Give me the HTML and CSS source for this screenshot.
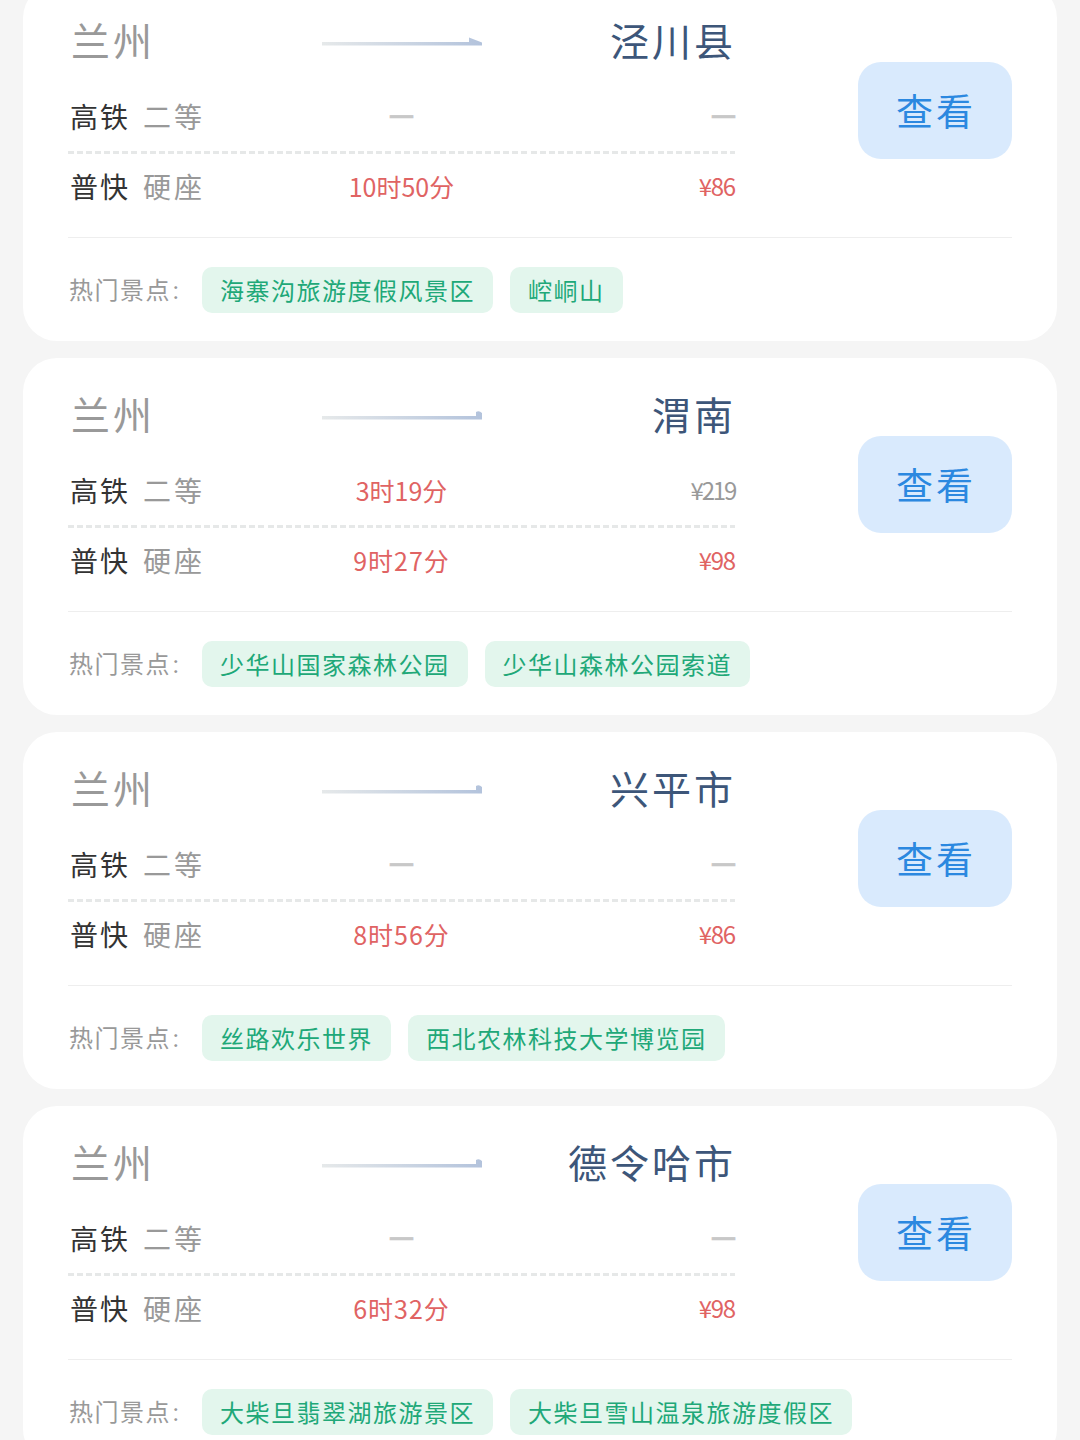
FILE: index.html
```
<!DOCTYPE html>
<html lang="zh-CN">
<head>
<meta charset="utf-8">
<title>兰州</title>
<link rel="stylesheet" href="styles.css">
</head>
<body>

<div class="list">

<div class="card">
  <div class="main">
    <div class="info">
      <div class="route">
        <span class="from">兰州</span>
        <svg class="arrow" width="160" height="10" viewBox="0 0 160 10">
          <defs><linearGradient id="fade"><stop offset="0" stop-color="#e6e9ea"/><stop offset="1" stop-color="#b3c3dc"/></linearGradient></defs>
          <path d="M0 5h147v-4.5l13 5v3H0z" fill="url(#fade)"/>
        </svg>
        <span class="to">泾川县</span>
      </div>
      <div class="row">
        <span class="type">高铁<i>二等</i></span><span class="time none">—</span><span class="price none">—</span>
      </div>
      <div class="row">
        <span class="type">普快<i>硬座</i></span><span class="time red">10时50分</span><span class="price red">¥86</span>
      </div>
    </div>
    <a class="view">查看</a>
  </div>
  <div class="spots">
    <span class="label">热门景点<b>：</b></span>
    <span class="tag">海寨沟旅游度假风景区</span>
    <span class="tag">崆峒山</span>
  </div>
</div>

<div class="card">
  <div class="main">
    <div class="info">
      <div class="route">
        <span class="from">兰州</span>
        <svg class="arrow" width="160" height="10" viewBox="0 0 160 10">
          <path d="M0 5h154v-4q3-2 6 1v6.5H0z" fill="url(#fade)"/>
        </svg>
        <span class="to">渭南</span>
      </div>
      <div class="row">
        <span class="type">高铁<i>二等</i></span><span class="time red">3时19分</span><span class="price long">¥219</span>
      </div>
      <div class="row">
        <span class="type">普快<i>硬座</i></span><span class="time red wide">9时27分</span><span class="price red">¥98</span>
      </div>
    </div>
    <a class="view">查看</a>
  </div>
  <div class="spots">
    <span class="label">热门景点<b>：</b></span>
    <span class="tag">少华山国家森林公园</span>
    <span class="tag">少华山森林公园索道</span>
  </div>
</div>

<div class="card">
  <div class="main">
    <div class="info">
      <div class="route">
        <span class="from">兰州</span>
        <svg class="arrow" width="160" height="10" viewBox="0 0 160 10">
          <path d="M0 5h154v-4q3-2 6 1v6.5H0z" fill="url(#fade)"/>
        </svg>
        <span class="to">兴平市</span>
      </div>
      <div class="row">
        <span class="type">高铁<i>二等</i></span><span class="time none">—</span><span class="price none">—</span>
      </div>
      <div class="row">
        <span class="type">普快<i>硬座</i></span><span class="time red wide">8时56分</span><span class="price red">¥86</span>
      </div>
    </div>
    <a class="view">查看</a>
  </div>
  <div class="spots">
    <span class="label">热门景点<b>：</b></span>
    <span class="tag">丝路欢乐世界</span>
    <span class="tag">西北农林科技大学博览园</span>
  </div>
</div>

<div class="card">
  <div class="main">
    <div class="info">
      <div class="route">
        <span class="from">兰州</span>
        <svg class="arrow" width="160" height="10" viewBox="0 0 160 10">
          <path d="M0 5h154v-4q3-2 6 1v6.5H0z" fill="url(#fade)"/>
        </svg>
        <span class="to">德令哈市</span>
      </div>
      <div class="row">
        <span class="type">高铁<i>二等</i></span><span class="time none">—</span><span class="price none">—</span>
      </div>
      <div class="row">
        <span class="type">普快<i>硬座</i></span><span class="time red wide">6时32分</span><span class="price red">¥98</span>
      </div>
    </div>
    <a class="view">查看</a>
  </div>
  <div class="spots">
    <span class="label">热门景点<b>：</b></span>
    <span class="tag">大柴旦翡翠湖旅游景区</span>
    <span class="tag">大柴旦雪山温泉旅游度假区</span>
  </div>
</div>

</div>

</body>
</html>
```

FILE: styles.css
```
* { box-sizing: border-box; }
body {
  margin: 0;
  height: 1440px;
  overflow: hidden;
  background: #f5f5f5;
  font-family: "Noto Sans CJK SC", sans-serif;
  color: #999;
}

/* the list is scrolled, so the first card starts above the window */
.list {
  display: flex;
  flex-direction: column;
  gap: 17px;
  margin-top: -16px;
  padding: 0 23px;
}
.card {
  flex: none;
  height: 357px;
  padding: 0 45px;
  border-radius: 34px;
  background: #fff;
}

.main {
  display: flex;
  justify-content: space-between;
  height: 253px;
}
.info { width: 667px; padding-top: 25px; }

.route, .row {
  display: grid;
  grid-template-columns: 1fr 160px 1fr;
  align-items: center;
}
.route {
  height: 60px;
  margin-bottom: 12px;
  font-size: 39px;
  line-height: 60px;
  letter-spacing: 3px;
}
.from { padding-left: 3px; }
.to { text-align: right; color: #3d5679; margin-right: -1px; }
.arrow { display: block; margin-top: 6px; }

.row {
  height: 64px;
  line-height: 60px;
  font-size: 25px;
}
.route + .row {
  height: 73px;
  padding-bottom: 4px;
  background: repeating-linear-gradient(90deg, #e6e8e8 0 6px, transparent 6px 9.07px) bottom / 100% 3px no-repeat;
}
.type {
  padding-left: 2px;
  color: #333;
  font-size: 28px;
  letter-spacing: 2px;
}
.type i { margin-left: 13px; font-style: normal; color: #999; letter-spacing: 3px; }
.time { text-align: center; white-space: nowrap; }
.wide { letter-spacing: 1px; }
.price { text-align: right; font-size: 24px; letter-spacing: -1.2px; }
.long { letter-spacing: -2.2px; }
.red { color: #e06363; }
.none {
  font: bold 23px/57px "Liberation Sans", Arial, sans-serif;
  letter-spacing: 0;
  color: #c8c8c8;
  -webkit-text-stroke: 0.6px #c8c8c8;
}

.view {
  width: 154px;
  height: 97px;
  margin-top: 78px;
  border-radius: 23px;
  background: #d9eafd;
  color: #2b88e0;
  font-size: 37px;
  line-height: 96px;
  letter-spacing: 3px;
  text-indent: 2px;
  text-align: center;
}

.spots {
  display: flex;
  gap: 17px;
  padding-top: 29px;
  border-top: 1px solid #eee;
  font-size: 24px;
  line-height: 45px;
  letter-spacing: 1.5px;
  white-space: nowrap;
}
.label { width: 117px; padding-left: 1px; line-height: 43px; }
.label b { font-size: 19px; font-weight: normal; }
.tag {
  height: 46px;
  padding: 0 18px;
  border-radius: 10px;
  background: #e3f6ed;
  color: #20a878;
}
```
